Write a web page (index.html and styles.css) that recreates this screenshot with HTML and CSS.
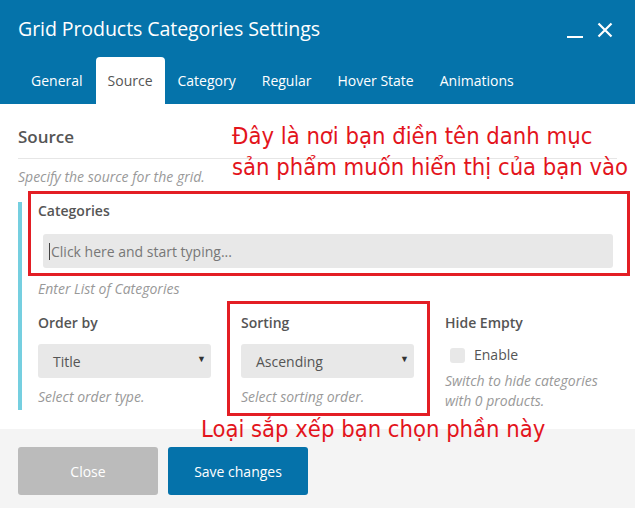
FILE: index.html
```html
<!DOCTYPE html>
<html>
<head>
<meta charset="utf-8">
<link rel="stylesheet" href="styles.css">
</head>
<body>
<div class="modal">
  <header class="head">
    <div class="titlebar">
      <h1 class="title">Grid Products Categories Settings</h1>
      <div class="controls">
        <span class="minimize"></span>
        <svg class="close-x" width="16" height="16" viewBox="0 0 16 16"><path d="M1.5 1.5L14.5 14.5M14.5 1.5L1.5 14.5" stroke="#fff" stroke-width="2.2" fill="none"/></svg>
      </div>
    </div>
    <nav class="tabs">
      <span class="tab">General</span>
      <span class="tab active">Source</span>
      <span class="tab">Category</span>
      <span class="tab">Regular</span>
      <span class="tab">Hover State</span>
      <span class="tab">Animations</span>
    </nav>
  </header>
  <main class="body">
    <h2 class="section">Source</h2>
    <p class="desc">Specify the source for the grid.</p>
    <div class="group">
      <div class="field">
        <div class="label">Categories</div>
        <div class="input"><span class="caret"></span>Click here and start typing...</div>
        <div class="help">Enter List of Categories</div>
      </div>
      <div class="row">
        <div class="col">
          <div class="label">Order by</div>
          <div class="select"><span>Title</span><span class="arrow">▼</span></div>
          <div class="help">Select order type.</div>
        </div>
        <div class="col">
          <div class="label">Sorting</div>
          <div class="select"><span>Ascending</span><span class="arrow">▼</span></div>
          <div class="help">Select sorting order.</div>
        </div>
        <div class="col col-last">
          <div class="label">Hide Empty</div>
          <div class="check"><span class="box"></span>Enable</div>
          <div class="help">Switch to hide categories with 0 products.</div>
        </div>
      </div>
    </div>
  </main>
  <footer class="foot">
    <button class="btn btn-close">Close</button>
    <button class="btn btn-save">Save changes</button>
  </footer>

  <div class="note note1">Đây là nơi bạn điền tên danh mục<br>sản phẩm muốn hiển thị của bạn vào</div>
  <div class="note note2">Loại sắp xếp bạn chọn phần này</div>
  <div class="mark mark1"></div>
  <div class="mark mark2"></div>
</div>
</body>
</html>
```
FILE: styles.css
```css
* { box-sizing: border-box; }
html, body { margin: 0; padding: 0; }
body { width: 635px; height: 508px; overflow: hidden; font-family: "Open Sans", sans-serif; background: #fff; }
.modal { position: relative; width: 635px; height: 508px; display: flex; flex-direction: column; }
.head { background: #0573aa; height: 104px; display: flex; flex-direction: column; }
.titlebar { display: flex; align-items: center; justify-content: space-between; height: 57px; padding: 0 22px 0 18px; }
.title { margin: 0; font-weight: 400; font-size: 19.6px; color: #fff; letter-spacing: -0.1px; }
.controls { display: flex; align-items: center; gap: 14px; margin-top: 2px; }
.minimize { display: block; width: 16px; height: 2px; background: #fff; margin-top: 14px; }
.close-x { display: block; }
.tabs { display: flex; padding-left: 18px; height: 47px; }
.tab { color: #fff; font-size: 14px; padding: 0 13px; display: flex; align-items: center; height: 47px; padding-bottom: 1px; }
.tab.active { background: #fff; color: #555; border-radius: 4px 4px 0 0; padding: 0 12px 1px; }
.body { flex: 1; padding: 0 18px; }
.section { margin: 0; font-size: 17px; font-weight: 600; color: #555; height: 55px; line-height: 24px; padding-top: 21px; border-bottom: 1px solid #e6e6e6; width: 599px; }
.desc { margin: 0; font-style: italic; font-size: 14px; line-height: 20px; color: #999; padding-top: 8px; height: 43px; }
.group { border-left: 4px solid #75cfe0; padding-left: 16px; height: 208px; }
.label { font-size: 14px; font-weight: 600; color: #555; line-height: 18px; }
.input { margin: 14px 0 0 5px; width: 570px; height: 34px; background: #e8e8e8; border-radius: 3px; font-size: 14px; color: #777; display: flex; align-items: center; padding-left: 6px; }
.caret { display: inline-block; width: 1px; height: 17px; background: #444; margin-right: 1px; }
.help { font-style: italic; font-size: 14px; color: #999; line-height: 20px; margin-top: 11px; }
.row { display: flex; margin-top: 15px; }
.col { width: 203px; flex-shrink: 0; }
.col-last { width: 165px; margin-left: 1px; }
.select { margin-top: 12px; width: 173px; height: 34px; background: #e8e8e8; border-radius: 3px; display: flex; align-items: center; justify-content: space-between; padding: 0 5px 0 15px; font-size: 14px; color: #555; }
.arrow { font-size: 9px; color: #333; margin-top: -5px; }
.col .help { margin-top: 9px; }
.check { margin-top: 12px; display: flex; align-items: center; font-size: 14px; color: #555; height: 20px; padding-left: 5px; }
.box { width: 15px; height: 15px; background: #e8e8e8; border-radius: 3px; margin-right: 9px; margin-top: 3px; }
.col-last .help { margin-top: 7px; }
.foot { background: #f4f4f4; height: 79px; display: flex; gap: 10px; padding: 18px 18px 0; }
.btn { width: 140px; height: 48px; border: 0; border-radius: 3px; font-family: "Open Sans", sans-serif; font-size: 14px; color: #fff; }
.btn-close { background: #bbb; }
.btn-save { background: #0572aa; }
.note { position: absolute; color: #e3141c; font-family: "DejaVu Sans Condensed", "DejaVu Sans", sans-serif; font-size: 23.6px; line-height: 31px; white-space: nowrap; }
.note1 { left: 232px; top: 121px; }
.note2 { left: 201px; top: 414px; }
.mark { position: absolute; border: 3px solid #e31e24; }
.mark1 { left: 28px; top: 191px; width: 602px; height: 85px; }
.mark2 { left: 227px; top: 301px; width: 203px; height: 115px; }
```
